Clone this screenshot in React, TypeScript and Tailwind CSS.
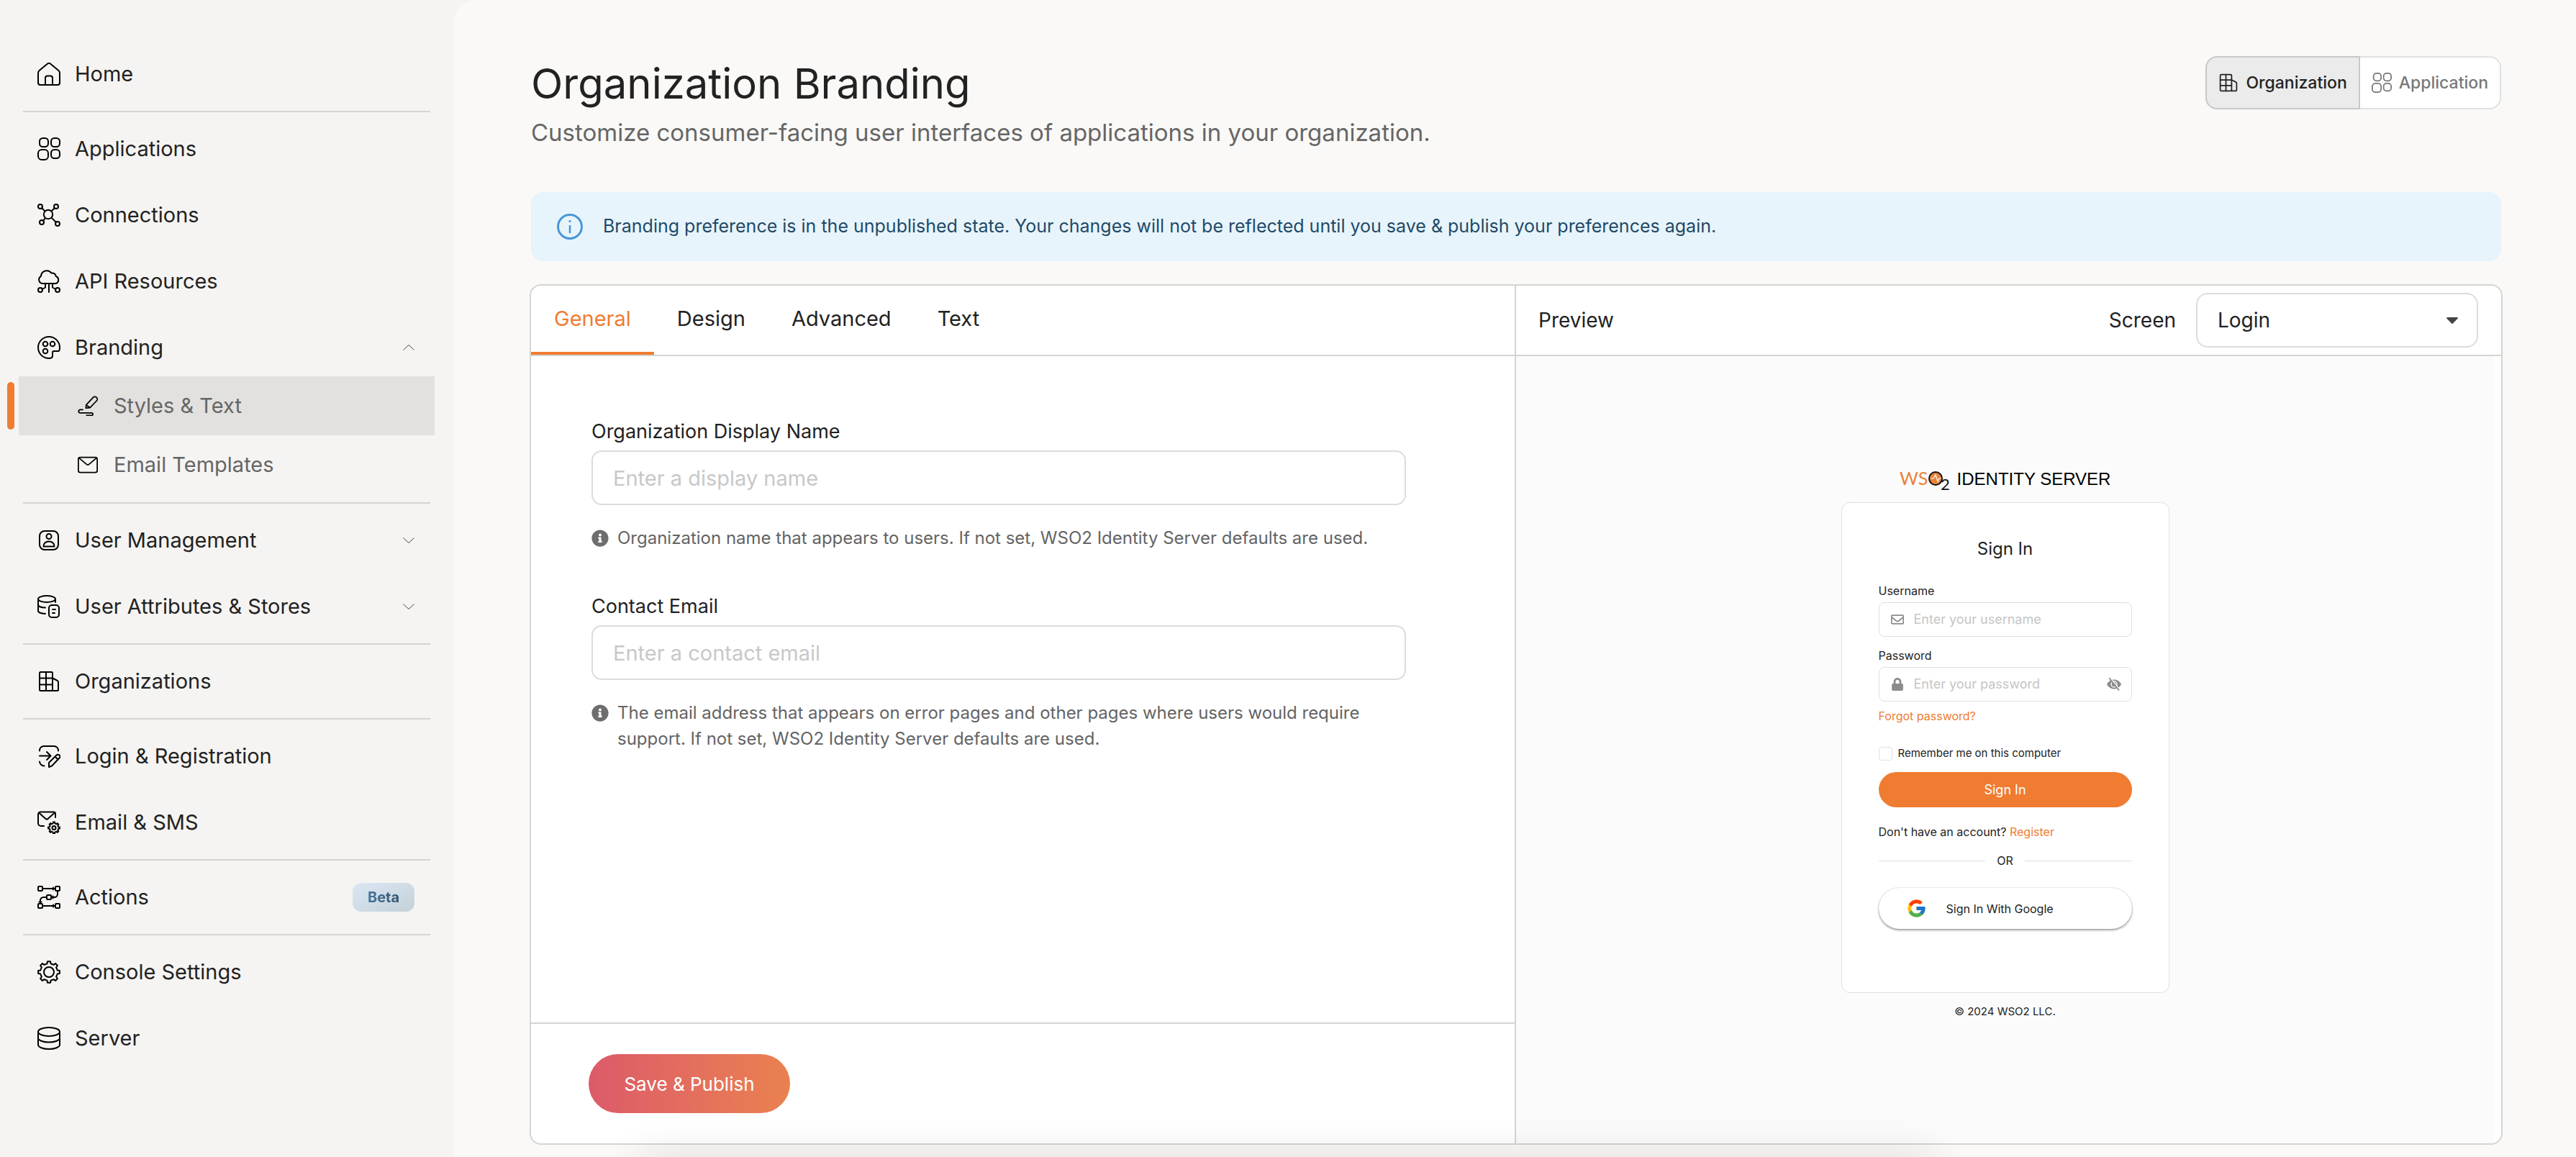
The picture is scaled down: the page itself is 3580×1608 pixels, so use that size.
import { useState } from 'react';
import type { ReactNode } from 'react';
import { FaInfoCircle, FaLock, FaRegEnvelope } from 'react-icons/fa';
import { FcGoogle } from 'react-icons/fc';

// Outline of a cog wheel, used by the settings icons
const gearPath = (cx: number, cy: number, outer: number, inner: number, teeth = 8) => {
  const step = (Math.PI * 2) / teeth;
  const points: string[] = [];
  for (let i = 0; i < teeth; i++) {
    const angle = i * step - Math.PI / 2;
    [
      [inner, -0.27],
      [outer, -0.17],
      [outer, 0.17],
      [inner, 0.27],
    ].forEach(([r, t]) => {
      points.push(`${(cx + r * Math.cos(angle + t * step)).toFixed(2)} ${(cy + r * Math.sin(angle + t * step)).toFixed(2)}`);
    });
  }
  return `M${points.join('L')}Z`;
};

const Icon = ({ children, className = 'size-8' }: { children: ReactNode; className?: string }) => (
  <svg
    viewBox="0 0 32 32"
    className={`${className} shrink-0`}
    fill="none"
    stroke="currentColor"
    strokeWidth={2}
    strokeLinecap="round"
    strokeLinejoin="round"
    aria-hidden="true"
  >
    {children}
  </svg>
);

const HomeIcon = () => (
  <Icon>
    <path d="M1 14.5V28a3 3 0 0 0 3 3h24a3 3 0 0 0 3-3V14.500a5 5 0 0 0-1.600-3.500L18.200 1.800a3.200 3.200 0 0 0-4.400 0L2.600 11A5 5 0 0 0 1 14.500Z" />
    <path d="M11 31V21.500a3 3 0 0 1 3-3h4a3 3 0 0 1 3 3V31" />
  </Icon>
);

const AppsIcon = ({ className }: { className?: string }) => (
  <Icon className={className}>
    <rect x="3" y="1" width="12" height="12" rx="4.500" />
    <rect x="19" y="1" width="12" height="12" rx="4.500" />
    <rect x="1" y="17" width="14" height="14" rx="5" />
    <rect x="19" y="17" width="12" height="12" rx="4.500" />
  </Icon>
);

const ConnectionsIcon = () => (
  <Icon>
    <circle cx="15" cy="15" r="6.200" />
    <circle cx="4" cy="4" r="3" />
    <circle cx="26" cy="4" r="3" />
    <circle cx="6" cy="26" r="3" />
    <circle cx="28" cy="28" r="3" />
    <path d="m6.200 6.200 4.200 4.200M23.800 6.200l-4.200 4.200M8 23.800l2.800-3.400M19.600 19.600l6.200 6.200" />
  </Icon>
);

const ApiIcon = () => (
  <Icon>
    <path d="M6.500 19A5.500 5.500 0 0 1 5 8.800 8 8 0 0 1 19.500 4.600c3-.6 5.800 1.200 6.300 4.400A5.300 5.300 0 0 1 25.500 19Z" />
    <path d="M16 19v12M11 19v5.500L6.500 27M21 19v5.500l4.500 2.500" />
    <circle cx="4" cy="28" r="3" />
    <circle cx="28" cy="28" r="3" />
  </Icon>
);

const PaletteIcon = () => (
  <Icon>
    <path d="M31 16A15 15 0 1 0 16 31c3.500 0 5-1 5-3.500V23c0-1.500.5-2 2-2h6c1.500 0 2-1 2-5Z" />
    <circle cx="11" cy="11" r="3.300" />
    <circle cx="21" cy="11" r="3.300" />
    <circle cx="11" cy="21" r="3.300" />
  </Icon>
);

const StylesIcon = () => (
  <Icon className="size-7">
    <path d="M13.500 14.500 24.500 2.800a3.600 3.600 0 0 1 5.600 5.200L19.500 19l-6.500.5ZM13.500 14.500l6 4.500" />
    <path d="M8 22H4.200a2.700 2.700 0 0 0 0 5.400H22a2 2 0 0 1 0 4h-8" />
  </Icon>
);

const MailIcon = () => (
  <Icon className="size-7">
    <rect x="1" y="4" width="30" height="24" rx="3" />
    <path d="m2 5 12.500 10.500a2.300 2.300 0 0 0 3 0L30 5" />
  </Icon>
);

const UserIcon = () => (
  <Icon>
    <rect x="3" y="3" width="26" height="26" rx="7" />
    <circle cx="16" cy="10.500" r="3.500" />
    <path d="M8.500 24.500c-.5-4 3-7 7.500-7s8 3 7.500 7Z" />
  </Icon>
);

const StoresIcon = () => (
  <Icon>
    <ellipse cx="13" cy="5.500" rx="12" ry="4.500" />
    <path d="M1 5.500V22c0 2 4 3.700 10 4M1 14c1 2.200 5 3.400 10 3.500M25 5.500V10" />
    <rect x="16" y="14" width="14" height="17" rx="4" />
    <path d="M21 20h4M21 25h3" />
  </Icon>
);

const BuildingIcon = ({ className }: { className?: string }) => (
  <Icon className={className}>
    <rect x="3" y="3" width="18" height="26" rx="1.500" />
    <path d="M12 3v26M3 11.500h18M3 20.500h18M21 11.500l6 3a3 3 0 0 1 2 2.500v10.500a1.500 1.500 0 0 1-1.500 1.500H21" />
  </Icon>
);

const LoginIcon = () => (
  <Icon>
    <path d="M3 8.500A6 6 0 0 1 9 2h14a6 6 0 0 1 6 6.500M3 23.500a6.500 6.500 0 0 0 6.500 6M3 15.500h15M13 10l5.500 5.500L13 21" />
    <path d="m16 25 10.500-10.500a2.600 2.600 0 0 1 4 4L20 29.500l-4 1.500ZM24.500 16.500l4 4" />
  </Icon>
);

const MailSettingsIcon = () => (
  <Icon>
    <path d="M25 9V4a2.500 2.500 0 0 0-2.500-2.500h-18A3.500 3.500 0 0 0 1 5v12a4 4 0 0 0 4 4h4" />
    <path d="m2 2.500 9.500 8.500a2.300 2.300 0 0 0 3 0L24 2.500" />
    <path d={gearPath(23, 23.5, 8, 6.3)} />
    <circle cx="23" cy="23.500" r="2.500" />
  </Icon>
);

const ActionsIcon = () => (
  <Icon>
    <rect x="1" y="1" width="6" height="6" rx="1" />
    <rect x="25" y="1" width="6" height="6" rx="1" />
    <rect x="13" y="13" width="6" height="6" rx="1" />
    <rect x="1" y="25" width="6" height="6" rx="1" />
    <rect x="25" y="25" width="6" height="6" rx="1" />
    <path d="M7 4h18M22 2.500v3M7 28h18M22 26.500v3M28 7v4.500a4.500 4.500 0 0 1-4.500 4.500H19M21.500 14.500v3M13 16H8.500A4.500 4.500 0 0 0 4 20.500V25M2.500 22.500h3" />
  </Icon>
);

const SettingsIcon = () => (
  <Icon>
    <path d={gearPath(16, 16, 15, 12)} />
    <circle cx="16" cy="16" r="7" />
  </Icon>
);

const ServerIcon = () => (
  <Icon>
    <ellipse cx="16" cy="7" rx="15" ry="6" />
    <path d="M1 7v18c0 3.300 6.700 6 15 6s15-2.700 15-6V7M1 15.500c0 3.300 6.700 6 15 6s15-2.700 15-6" />
  </Icon>
);

const HiddenIcon = () => (
  <svg viewBox="0 0 20 18" className="w-5 h-[18px]" aria-hidden="true">
    <path d="M0 9c2-4 5.500-6.500 10-6.500S18 5 20 9c-2 4-5.500 6.500-10 6.500S2 13 0 9Z" fill="#8c8c8c" />
    <circle cx="10" cy="9" r="4" fill="none" stroke="#fff" strokeWidth="1.300" />
    <path d="m5 0 12.500 16.500" stroke="#fff" strokeWidth="1.500" />
    <path d="m3.500.5 13 16.500" stroke="#8c8c8c" strokeWidth="1.800" strokeLinecap="round" />
  </svg>
);

const Chevron = ({ up = false }: { up?: boolean }) => (
  <svg viewBox="0 0 16 8" className="w-4 h-2" fill="none" stroke="#444" strokeWidth={1} aria-hidden="true">
    <path d={up ? 'M.5 7.500 8 .5l7.500 7' : 'M.5.5 8 7.500 15.500.5'} />
  </svg>
);

const NavItem = ({ icon, label, end }: { icon: ReactNode; label: string; end?: ReactNode }) => (
  <a href="#" className="flex items-center h-[92px] pl-[52px] pr-[54px] gap-5 text-[29px] leading-9 text-[#222]">
    <span className="text-black">{icon}</span>
    <span className="flex-1">{label}</span>
    {end}
  </a>
);

const SubNavItem = ({ icon, label, active = false }: { icon: ReactNode; label: string; active?: boolean }) => (
  <a
    href="#"
    className={`relative flex items-center h-[82px] mx-[26px] pl-[82px] gap-[22px] text-[29px] leading-9 text-[#666] ${
      active ? 'bg-[#e2e1df]' : ''
    }`}
  >
    {active && <span className="absolute -left-4 inset-y-2 w-2.5 rounded-full bg-[#ef7c31]" />}
    <span className="text-black">{icon}</span>
    {label}
  </a>
);

const Separator = () => <hr className="my-[5px] mx-8 border-t-2 border-[#d4d4d2]" />;

const Sidebar = () => (
  <aside className="w-[630px] shrink-0 pt-[57px]">
    <nav>
      <NavItem icon={<HomeIcon />} label="Home" />
      <Separator />
      <NavItem icon={<AppsIcon />} label="Applications" />
      <NavItem icon={<ConnectionsIcon />} label="Connections" />
      <NavItem icon={<ApiIcon />} label="API Resources" />
      <NavItem icon={<PaletteIcon />} label="Branding" end={<Chevron up />} />
      <div className="-mt-1.5 pb-1.5">
        <SubNavItem icon={<StylesIcon />} label="Styles & Text" active />
        <SubNavItem icon={<MailIcon />} label="Email Templates" />
      </div>
      <Separator />
      <NavItem icon={<UserIcon />} label="User Management" end={<Chevron />} />
      <NavItem icon={<StoresIcon />} label="User Attributes & Stores" end={<Chevron />} />
      <Separator />
      <NavItem icon={<BuildingIcon />} label="Organizations" />
      <Separator />
      <NavItem icon={<LoginIcon />} label="Login & Registration" />
      <NavItem icon={<MailSettingsIcon />} label="Email & SMS" />
      <Separator />
      <NavItem
        icon={<ActionsIcon />}
        label="Actions"
        end={
          <span className="flex items-center justify-center w-[86px] h-10 rounded-xl bg-linear-to-br from-[#dbe7f4] to-[#c3d1d8] text-[20px] leading-6 font-bold">
            <span className="bg-linear-to-r from-[#44769f] to-[#33556c] bg-clip-text text-transparent">Beta</span>
          </span>
        }
      />
      <Separator />
      <NavItem icon={<SettingsIcon />} label="Console Settings" />
      <NavItem icon={<ServerIcon />} label="Server" />
    </nav>
  </aside>
);

type FieldProps = { id: string; label: string; placeholder: string; hint: string; type?: string };

const Field = ({ id, label, placeholder, hint, type = 'text' }: FieldProps) => (
  <div>
    <label htmlFor={id} className="block text-[27px] leading-8 text-[#222]">
      {label}
    </label>
    <input
      id={id}
      type={type}
      placeholder={placeholder}
      className="block w-full h-[76px] mt-2.5 px-7 rounded-[14px] border-2 border-[#dcdcdc] bg-white text-[29px] placeholder:text-[#c8c8c8] outline-none"
    />
    <p className="flex gap-3 mt-7 text-[24px] leading-9 text-[#646464]">
      <FaInfoCircle className="size-6 mt-1.5 shrink-0 text-[#6e6e6e]" />
      <span>{hint}</span>
    </p>
  </div>
);

const ProductLogo = () => (
  <div className="flex items-center h-10 gap-2.5">
    <svg viewBox="0 0 70 40" className="w-[70px] h-10" role="img" aria-label="WSO2">
      <text x="0" y="28" fontSize="25" fill="#e8833a" className="font-['Lato']">
        WS
      </text>
      <circle cx="50" cy="19" r="9" fill="#e8833a" stroke="#111" strokeWidth="2" />
      <path d="M43 19h4l3-5 3 9 2-4h3" fill="none" stroke="#fff" strokeWidth="1.200" />
      <text x="57" y="35" fontSize="22" fill="#111" className="font-['Lato']">
        2
      </text>
    </svg>
    <span className="font-['Liberation_Sans',sans-serif] text-[24px] leading-10 text-black">IDENTITY SERVER</span>
  </div>
);

const LoginPreview = () => (
  <div className="flex flex-col items-center flex-1 mr-2.5 pt-[151px] bg-[#fbfbfb] text-[#222]">
    <ProductLogo />
    <form className="w-[456px] mt-3 pt-12 pb-[88px] px-[51px] rounded-xl border border-[#dfe0e2] bg-white text-[16px] leading-5">
      <h2 className="text-center text-[24px] leading-8">Sign In</h2>
      <label htmlFor="username" className="block mt-8">
        Username
      </label>
      <div className="flex items-center h-12 mt-1.5 px-4 gap-3.5 rounded-lg border border-[#dfe0e2]">
        <FaRegEnvelope className="size-[18px] text-[#8c8c8c]" />
        <input
          id="username"
          placeholder="Enter your username"
          className="flex-1 min-w-0 text-[18px] placeholder:text-[#c5c5c5] outline-none"
        />
      </div>
      <label htmlFor="password" className="block mt-4">
        Password
      </label>
      <div className="flex items-center h-12 mt-1.5 pl-4 pr-3.5 gap-3.5 rounded-lg border border-[#dfe0e2]">
        <FaLock className="size-[18px] text-[#8c8c8c]" />
        <input
          id="password"
          type="password"
          placeholder="Enter your password"
          className="flex-1 min-w-0 text-[18px] placeholder:text-[#c5c5c5] outline-none"
        />
        <HiddenIcon />
      </div>
      <a href="#" className="block mt-2.5 text-[#ef7c31]">
        Forgot password?
      </a>
      <label className="flex items-center h-5 mt-8 gap-2 text-[15px]">
        <input type="checkbox" className="appearance-none size-[19px] rounded border border-[#dfe0e2] bg-white" />
        Remember me on this computer
      </label>
      <button type="button" className="block w-full h-[49px] mt-4 rounded-full bg-[#ef7c31] text-[18px] text-white">
        Sign In
      </button>
      <p className="mt-6">
        Don't have an account?{' '}
        <a href="#" className="text-[#ef7c31]">
          Register
        </a>
      </p>
      <div className="flex items-center mt-5 gap-4">
        <span className="flex-1 h-px bg-[#dfe0e2]" />
        OR
        <span className="flex-1 h-px bg-[#dfe0e2]" />
      </div>
      <button
        type="button"
        className="flex items-center w-full h-[57px] mt-7 pl-[38px] gap-[27px] rounded-full bg-white shadow-[0_0_2px_rgba(0,0,0,0.25),0_2px_3px_rgba(0,0,0,0.35)]"
      >
        <FcGoogle className="size-[29px]" />
        Sign In With Google
      </button>
    </form>
    <p className="mt-4 text-[15px] leading-5">© 2024 WSO2 LLC.</p>
  </div>
);

const tabs = ['General', 'Design', 'Advanced', 'Text'];

function App() {
  const [activeTab, setActiveTab] = useState('General');

  return (
    <div className="relative flex min-h-screen overflow-hidden bg-[#f5f4f2] font-['Inter',sans-serif] text-[#222]">
      <Sidebar />

      <main className="flex flex-col flex-1 min-w-0 pt-[78px] pb-[17px] pl-[106px] pr-[102px] rounded-tl-[32px] bg-[#faf9f7]">
        {/* Page header */}
        <header className="flex items-start justify-between mx-0.5">
          <div className="pt-1.5">
            <h1 className="text-[58px] leading-16">Organization Branding</h1>
            <p className="mt-4 text-[33px] leading-10 text-[#666]">
              Customize consumer-facing user interfaces of applications in your organization.
            </p>
          </div>
          <div className="flex h-[74px] text-[23px] font-medium">
            <button className="flex items-center px-4 gap-2.5 rounded-l-2xl border-2 border-[#c8c8c8] bg-[#ebebeb]">
              <BuildingIcon className="size-7" />
              Organization
            </button>
            <button className="flex items-center px-4 gap-2.5 rounded-r-2xl border-2 border-l-0 border-[#e0e0e0] bg-white text-[#777]">
              <AppsIcon className="size-7" />
              Application
            </button>
          </div>
        </header>

        {/* Unpublished notice */}
        <div className="flex items-center h-24 mx-0.5 mt-[63px] px-9 gap-7 rounded-2xl bg-[#e7f4fb] text-[25px] text-[#1f4a68]">
          <svg viewBox="0 0 36 36" className="size-9 shrink-0" fill="none" stroke="#4a96d9" aria-hidden="true">
            <circle cx="18" cy="18" r="16.500" strokeWidth="3" />
            <path d="M18 16v11M18 9v3" strokeWidth="2.500" />
          </svg>
          Branding preference is in the unpublished state. Your changes will not be reflected until you save &amp; publish
          your preferences again.
        </div>

        <section className="grid grid-cols-2 flex-1 mt-8 rounded-2xl border-2 border-[#d4d4d2] bg-white overflow-hidden">
          <div className="flex flex-col border-r-2 border-[#d4d4d2]">
            <div role="tablist" className="flex h-[98px] border-b-2 border-[#d4d4d2]">
              {tabs.map((tab) => (
                <button
                  key={tab}
                  role="tab"
                  aria-selected={tab === activeTab}
                  onClick={() => setActiveTab(tab)}
                  className={`px-8 border-b-4 text-[29px] ${
                    tab === activeTab ? 'border-[#ef7c31] text-[#ef7c31]' : 'border-transparent'
                  }`}
                >
                  {tab}
                </button>
              ))}
            </div>
            <div className="flex flex-col flex-1 gap-[61px] pt-[89px] pl-[84px] pr-[151px]">
              <Field
                id="display-name"
                label="Organization Display Name"
                placeholder="Enter a display name"
                hint="Organization name that appears to users. If not set, WSO2 Identity Server defaults are used."
              />
              <Field
                id="contact-email"
                type="email"
                label="Contact Email"
                placeholder="Enter a contact email"
                hint="The email address that appears on error pages and other pages where users would require support. If not set, WSO2 Identity Server defaults are used."
              />
            </div>
            <div className="flex items-center h-[168px] pl-20 border-t-2 border-[#d4d4d2]">
              <button className="w-[280px] h-[82px] rounded-full bg-linear-to-r from-[#dc5a69] to-[#ea814f] text-[26px] text-white">
                Save &amp; Publish
              </button>
            </div>
          </div>

          <div className="flex flex-col">
            <div className="flex items-center h-[98px] pl-[31px] pr-8 border-b-2 border-[#d4d4d2] text-[28px]">
              <span className="flex-1">Preview</span>
              <label htmlFor="screen">Screen</label>
              <div className="relative ml-7">
                <select
                  id="screen"
                  className="appearance-none w-[392px] h-[76px] px-7 rounded-2xl border-2 border-[#dcdcdc] bg-white outline-none"
                >
                  <option>Login</option>
                </select>
                <svg viewBox="0 0 16 9" className="absolute right-7 top-[34px] w-4 h-[9px] fill-[#444] pointer-events-none">
                  <path d="M1 0h14a1 1 0 0 1 .7 1.600L8.700 8.700a1 1 0 0 1-1.400 0L.3 1.600A1 1 0 0 1 1 0Z" />
                </svg>
              </div>
            </div>
            <LoginPreview />
          </div>
        </section>
      </main>

      {/* Soft shadow along the bottom edge */}
      <div className="absolute left-[25%] right-[25%] -bottom-5 h-5 rounded-full shadow-[0_0_50px_10px_rgba(0,0,0,0.09)] pointer-events-none" />
    </div>
  );
}

export default App;
